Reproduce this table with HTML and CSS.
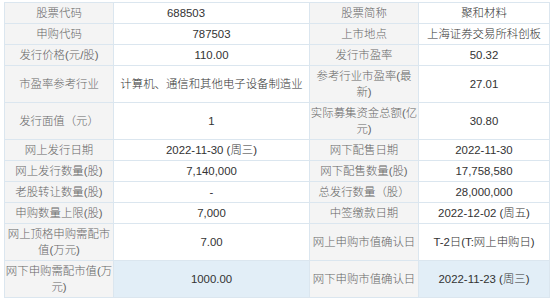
FILE: index.html
```html
<!DOCTYPE html>
<html lang="zh-CN">
<head>
    <meta charset="UTF-8">
    <title>新股发行资料</title>
    <link rel="stylesheet" href="styles.css">
</head>
<body>

    <table class="ipo-table">
        <colgroup>
            <col class="col-label">
            <col class="col-value">
            <col class="col-label">
            <col class="col-value-narrow">
        </colgroup>
        <tbody>
            <tr>
                <th>股票代码</th>
                <td class="code-left">688503</td>
                <th>股票简称</th>
                <td>聚和材料</td>
            </tr>
            <tr>
                <th>申购代码</th>
                <td>787503</td>
                <th>上市地点</th>
                <td>上海证券交易所科创板</td>
            </tr>
            <tr>
                <th>发行价格(元/股)</th>
                <td>110.00</td>
                <th>发行市盈率</th>
                <td>50.32</td>
            </tr>
            <tr>
                <th>市盈率参考行业</th>
                <td>计算机、通信和其他电子设备制造业</td>
                <th>参考行业市盈率(最新)</th>
                <td>27.01</td>
            </tr>
            <tr>
                <th>发行面值（元）</th>
                <td>1</td>
                <th>实际募集资金总额(亿元)</th>
                <td>30.80</td>
            </tr>
            <tr>
                <th>网上发行日期</th>
                <td>2022-11-30 (周三)</td>
                <th>网下配售日期</th>
                <td>2022-11-30</td>
            </tr>
            <tr>
                <th>网上发行数量(股)</th>
                <td>7,140,000</td>
                <th>网下配售数量(股)</th>
                <td>17,758,580</td>
            </tr>
            <tr>
                <th>老股转让数量(股)</th>
                <td>-</td>
                <th>总发行数量（股）</th>
                <td>28,000,000</td>
            </tr>
            <tr>
                <th>申购数量上限(股)</th>
                <td>7,000</td>
                <th>中签缴款日期</th>
                <td>2022-12-02 (周五)</td>
            </tr>
            <tr>
                <th>网上顶格申购需配市值(万元)</th>
                <td>7.00</td>
                <th>网上申购市值确认日</th>
                <td>T-2日(T:网上申购日)</td>
            </tr>
            <tr class="highlight">
                <th>网下申购需配市值(万元)</th>
                <td>1000.00</td>
                <th>网下申购市值确认日</th>
                <td>2022-11-23 (周三)</td>
            </tr>
        </tbody>
    </table>

</body>
</html>
```

FILE: styles.css
```css
body {
    margin: 2px 0 0 4px;
    background-color: white;
    font-family: "Liberation Sans", Arial, "Noto Sans CJK SC", sans-serif;
    font-size: 11.4px;
}
.ipo-table {
    width: 545px;
    table-layout: fixed;
    border-collapse: collapse;
}
.col-label {
    width: 109px;
}
.col-value {
    width: 196px;
}
.col-value-narrow {
    width: 131px;
}
.ipo-table th, .ipo-table td {
    border: 1px solid #dbe6ef;
    padding: 2px 0;
    line-height: 16px;
    text-align: center;
    vertical-align: middle;
    font-weight: 300;
}
.ipo-table th {
    background-color: #f4f4f4;
    color: #666;
}
.ipo-table td {
    color: #333;
}
.ipo-table td.code-left {
    text-align: left;
    padding-left: 53px;
}
.highlight td {
    background-color: #e2eef7;
}
```
